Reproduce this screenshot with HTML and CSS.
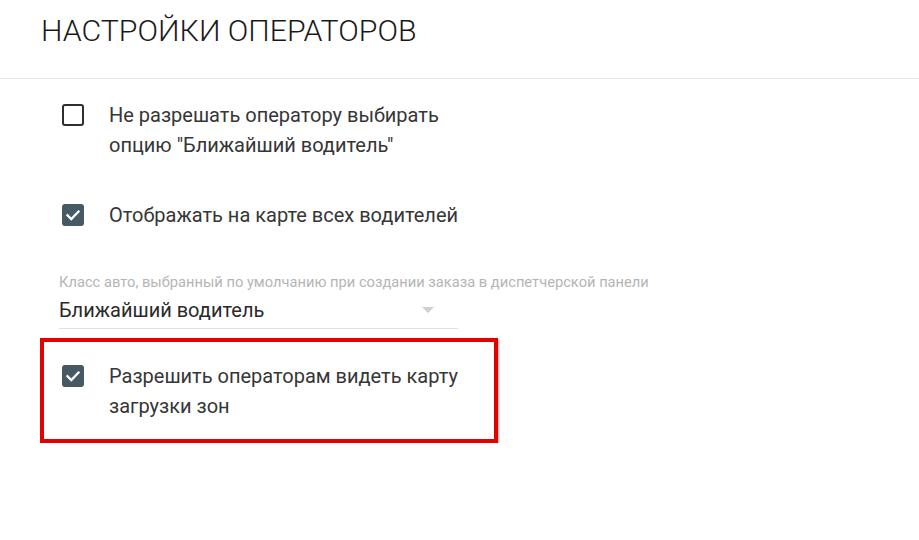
FILE: index.html
```html
<!DOCTYPE html>
<html lang="ru">
<head>
<meta charset="utf-8">
<title>Настройки операторов</title>
<link rel="stylesheet" href="styles.css">
</head>
<body>
<header class="page-header">
  <h1 class="page-title">НАСТРОЙКИ ОПЕРАТОРОВ</h1>
</header>
<main class="content">
  <label class="option option-first">
    <span class="checkbox"></span>
    <span class="option-text">Не разрешать оператору выбирать<br>опцию "Ближайший водитель"</span>
  </label>
  <label class="option option-second">
    <span class="checkbox checked">
      <svg viewBox="0 0 22 22" width="22" height="22"><path d="M5.5 11.2 L9.3 15 L16.5 7.6" fill="none" stroke="#fff" stroke-width="2.3" stroke-linecap="square"/></svg>
    </span>
    <span class="option-text">Отображать на карте всех водителей</span>
  </label>
  <div class="select-field">
    <div class="select-label">Класс авто, выбранный по умолчанию при создании заказа в диспетчерской панели</div>
    <div class="select-value">
      <span>Ближайший водитель</span>
      <span class="select-arrow"></span>
    </div>
  </div>
  <div class="highlight">
    <label class="option">
      <span class="checkbox checked">
        <svg viewBox="0 0 22 22" width="22" height="22"><path d="M5.5 11.2 L9.3 15 L16.5 7.6" fill="none" stroke="#fff" stroke-width="2.3" stroke-linecap="square"/></svg>
      </span>
      <span class="option-text">Разрешить операторам видеть карту<br>загрузки зон</span>
    </label>
  </div>
</main>
</body>
</html>
```
FILE: styles.css
```css
html, body {
  margin: 0;
  padding: 0;
  background: #fff;
  font-family: Roboto, "Noto Sans", "Liberation Sans", sans-serif;
  color: #333;
}
.page-header {
  height: 79px;
  border-bottom: 1px solid #e3e3e3;
  padding-left: 41px;
  box-sizing: border-box;
  display: flex;
  align-items: flex-start;
}
.page-title {
  margin: 12px 0 0 0;
  font-size: 30.3px;
  line-height: 38px;
  font-weight: 300;
  color: #1a1a1a;
}
.content {
  padding: 21px 0 0 40px;
}
.option {
  display: flex;
  align-items: flex-start;
  padding-left: 22px;
}
.option-second {
  margin-top: 40px;
}
.checkbox {
  flex: none;
  width: 22px;
  height: 22px;
  margin-top: 4px;
  box-sizing: border-box;
  border: 2.5px solid #2e2e2e;
  border-radius: 3px;
  display: flex;
}
.checkbox.checked {
  border: none;
  background: #455a64;
}
.option-text {
  margin-left: 25px;
  font-size: 20px;
  line-height: 30px;
  color: #363636;
}
.select-field {
  margin: 44px 0 0 19px;
  width: 399px;
  border-bottom: 1px solid #e0e0e0;
  padding-bottom: 6px;
}
.select-label {
  font-size: 14.7px;
  line-height: 16px;
  color: #b5b5b5;
  white-space: nowrap;
}
.select-value {
  margin-top: 8px;
  font-size: 20px;
  line-height: 24px;
  color: #2a2a2a;
  display: flex;
  align-items: center;
  justify-content: space-between;
  padding-right: 24px;
}
.select-arrow {
  width: 0;
  height: 0;
  border-left: 6px solid transparent;
  border-right: 6px solid transparent;
  border-top: 6px solid #cfcfcf;
}
.highlight {
  margin-top: 9px;
  width: 458px;
  height: 105px;
  box-sizing: border-box;
  border: 4px solid #e30000;
  padding: 19px 0 0 18px;
  box-shadow: 1px 1px 2px rgba(0,0,0,0.35);
}
.highlight .option {
  padding-left: 0;
}
```
